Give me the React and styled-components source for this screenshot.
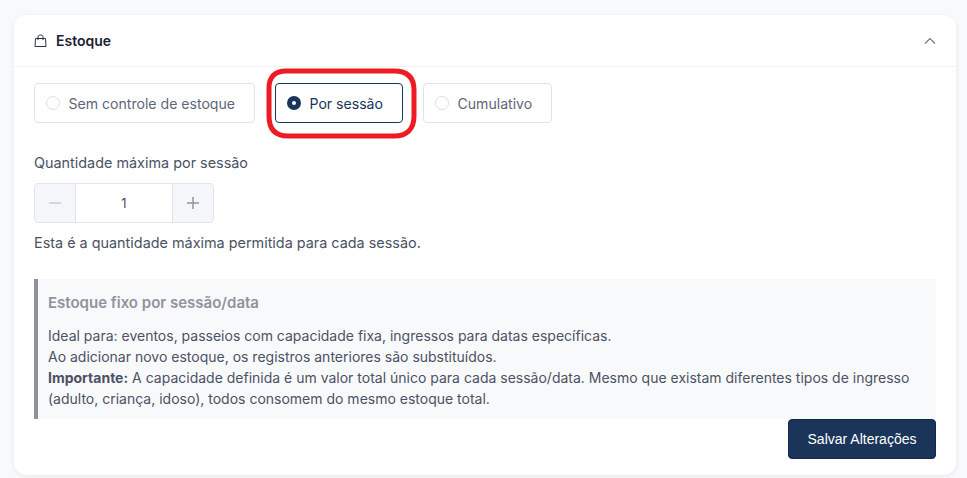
import React from 'react';
import styled, { createGlobalStyle } from 'styled-components';

const GlobalStyle = createGlobalStyle`
  html, body {
    margin: 0;
    padding: 0;
    background: #f8f9fb;
    font-family: Inter, "Liberation Sans", sans-serif;
  }
`;

const Page = styled.div`
  padding: 15px 11px 3px 14px;
  height: 478px;
  box-sizing: border-box;
  overflow: hidden;
`;

const Card = styled.section`
  position: relative;
  background: #fff;
  border-radius: 12px;
  height: 460px;
  box-shadow: 0 1px 4px rgba(20, 30, 50, 0.08);
`;

const Header = styled.header`
  height: 52px;
  box-sizing: border-box;
  border-bottom: 1px solid #f1f2f4;
  padding: 0 20px;
  display: flex;
  align-items: center;
  justify-content: space-between;
`;

const Title = styled.h3`
  margin: 0;
  display: flex;
  align-items: center;
  gap: 9px;
  font-size: 14px;
  font-weight: 600;
  color: #1a2233;
`;

const Body = styled.div`
  padding: 16px 20px 0;
`;

const Options = styled.div`
  display: flex;
  gap: 20px;
`;

const Option = styled.div`
  width: ${p => p.$width}px;
  height: 40px;
  box-sizing: border-box;
  display: flex;
  align-items: center;
  gap: 8.5px;
  padding-left: 11px;
  border: 1px solid ${p => (p.$active ? '#1a3559' : '#e1e3ea')};
  border-radius: 4px;
  font-size: 14.08px;
  color: ${p => (p.$active ? '#1a3559' : '#5e6678')};
`;

const Radio = styled.span`
  width: 14px;
  height: 14px;
  box-sizing: border-box;
  border-radius: 50%;
  background: #fff;
  border: ${p => (p.$active ? '5px solid #1a3559' : '1px solid #dcdfe8')};
`;

const Label = styled.div`
  margin-top: 31px;
  font-size: 14.4px;
  line-height: 17px;
  color: #4b5263;
`;

const Stepper = styled.div`
  margin-top: 12px;
  width: 180px;
  height: 40px;
  box-sizing: border-box;
  display: flex;
  border: 1px solid #e1e3ea;
  border-radius: 4px;
  overflow: hidden;
`;

const StepButton = styled.div`
  width: 40px;
  background: #f5f6f9;
  display: flex;
  align-items: center;
  justify-content: center;
  color: ${p => (p.$off ? '#c9ccd4' : '#8f94a0')};
`;

const StepValue = styled.div`
  flex: 1;
  display: flex;
  align-items: center;
  justify-content: center;
  border-left: 1px solid #e1e3ea;
  border-right: 1px solid #e1e3ea;
  font-size: 13px;
  color: #4b5263;
`;

const Help = styled.p`
  margin: 11px 0 0;
  font-size: 14.4px;
  line-height: 17px;
  color: #4b5263;
`;

const Notice = styled.div`
  margin-top: 28px;
  height: 140px;
  box-sizing: border-box;
  padding: 15px 10px 0 10px;
  background: #f8f9fb;
  border-left: 4px solid #8f929b;
`;

const NoticeTitle = styled.h4`
  margin: 0 0 14px;
  font-size: 15px;
  line-height: 17px;
  font-weight: 600;
  color: #8f939e;
`;

const NoticeText = styled.p`
  margin: 0;
  font-size: 14px;
  line-height: 21px;
  color: #4b5263;

  strong {
    font-weight: 700;
  }
`;

const Footer = styled.div`
  display: flex;
  justify-content: flex-end;
`;

const SaveButton = styled.button`
  width: 148px;
  height: 40px;
  border: 1px solid #14294a;
  border-radius: 4px;
  background: #1a3559;
  color: #fff;
  font-family: "Liberation Sans", Arial, sans-serif;
  font-size: 14px;
`;

const Highlight = styled.svg`
  position: absolute;
  left: 252px;
  top: 53px;
  pointer-events: none;
`;

export default function App() {
  return (
    <Page>
      <GlobalStyle />
      <Card>
        <Header>
          <Title>
            <svg width="13" height="14" viewBox="0 0 13 14" fill="none" stroke="#2b3240" strokeWidth="1">
              <path d="M1.500 4.500h10l.5 8H1z" />
              <path d="M4 6V2.800C4 1.600 5 1 6.500 1S9 1.600 9 2.800V6" />
            </svg>
            Estoque
          </Title>
          <svg width="12" height="8" viewBox="0 0 12 8" fill="none" stroke="#6f7480" strokeWidth="1.100">
            <path d="M1 6.500 6 1.500l5 5" />
          </svg>
        </Header>
        <Body>
          <Options>
            <Option $width={221}>
              <Radio />
              Sem controle de estoque
            </Option>
            <Option $active $width={128}>
              <Radio $active />
              Por sessão
            </Option>
            <Option $width={129}>
              <Radio />
              Cumulativo
            </Option>
          </Options>
          <Label>Quantidade máxima por sessão</Label>
          <Stepper>
            <StepButton $off>
              <svg width="14" height="14" viewBox="0 0 14 14" stroke="currentColor" strokeWidth="1.500">
                <path d="M1 7h12" />
              </svg>
            </StepButton>
            <StepValue>1</StepValue>
            <StepButton>
              <svg width="14" height="14" viewBox="0 0 14 14" stroke="currentColor" strokeWidth="1.500">
                <path d="M1 7h12M7 1v12" />
              </svg>
            </StepButton>
          </Stepper>
          <Help>Esta é a quantidade máxima permitida para cada sessão.</Help>
          <Notice>
            <NoticeTitle>Estoque fixo por sessão/data</NoticeTitle>
            <NoticeText>
              Ideal para: eventos, passeios com capacidade fixa, ingressos para datas específicas.
              <br />
              Ao adicionar novo estoque, os registros anteriores são substituídos.
              <br />
              <strong>Importante:</strong> A capacidade definida é um valor total único para cada sessão/data. Mesmo que existam diferentes tipos de ingresso (adulto, criança, idoso), todos consomem do mesmo estoque total.
            </NoticeText>
          </Notice>
          <Footer>
            <SaveButton>Salvar Alterações</SaveButton>
          </Footer>
        </Body>
        <Highlight width="151" height="71" viewBox="0 0 151 71" fill="none">
          <path
            d="M20 3H128C141 3 148 9 148 22V48C148 61 141 68 128 68H22C9 68 3 61 3 48V20C3 9 9 3 20 3Z"
            stroke="#ed1c24"
            strokeWidth="5"
          />
        </Highlight>
      </Card>
    </Page>
  );
}
